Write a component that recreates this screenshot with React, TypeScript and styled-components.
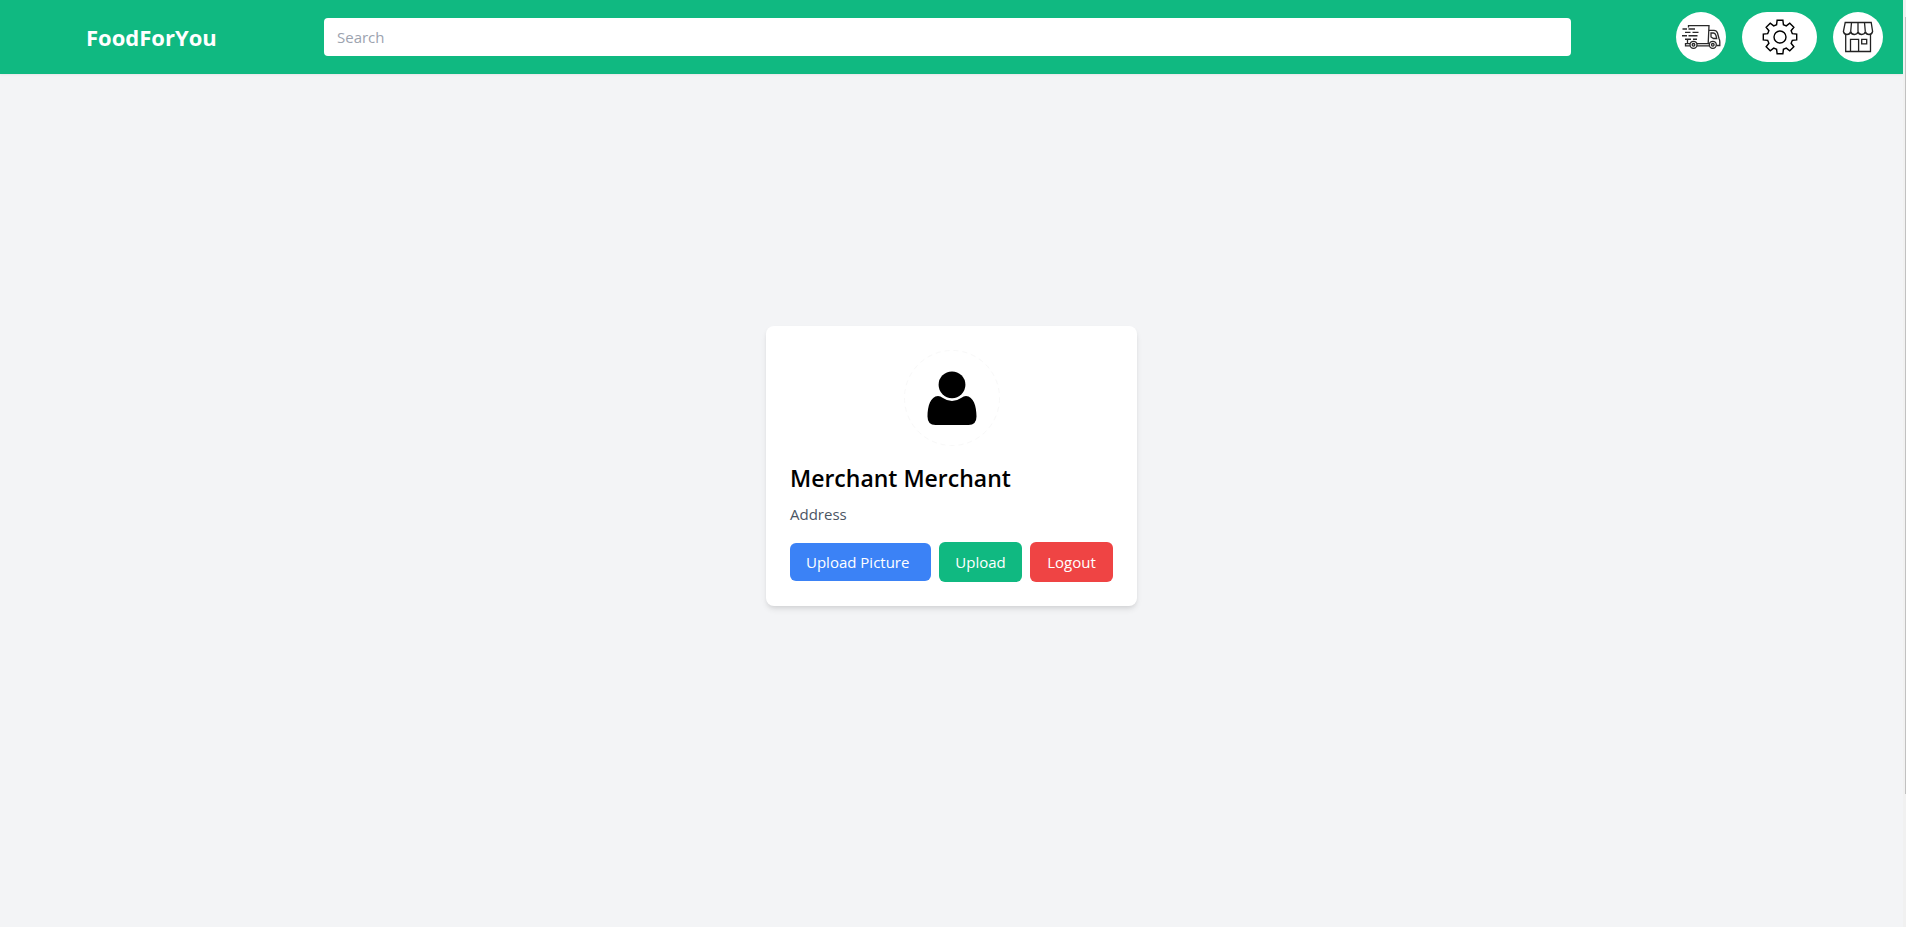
import React from "react";
import styled, { createGlobalStyle } from "styled-components";

const GlobalStyle = createGlobalStyle`
  *, *::before, *::after { box-sizing: border-box; }
  body {
    margin: 0;
    background: #f3f4f6;
    color: #000;
    font-family: "Open Sans", "Noto Sans", sans-serif;
    font-size: 15px;
    line-height: 24px;
  }
`;

const Screen = styled.div`
  display: flex;
  min-height: 100vh;
`;

const Page = styled.div`
  flex: 1;
  min-width: 0;
  display: flex;
  flex-direction: column;
`;

const ScrollTrack = styled.div`
  display: flex;
  flex-direction: column;
  width: 3px;
  padding: 17px 0 133px 2px;
  background: #f1f1f1;
`;

const ScrollThumb = styled.div`
  flex: 1;
  background: #c1c1c1;
`;

const Header = styled.header`
  display: grid;
  grid-template-columns: 324px minmax(0, 1fr) 332px;
  align-items: center;
  padding: 12px 0;
  background: #10b981;
  box-shadow: 0 1px 2px rgba(0, 0, 0, 0.06);
`;

const Brand = styled.a`
  padding-left: 86px;
  color: #fff;
  font-size: 22px;
  font-weight: 700;
  line-height: 32px;
  text-decoration: none;
`;

const SearchInput = styled.input`
  width: 100%;
  height: 38px;
  padding: 0 13px;
  border: 0;
  border-radius: 4px;
  background: #fff;
  color: #111827;
  font: inherit;

  &::placeholder {
    color: #9ca3af;
    opacity: 1;
  }
`;

const Actions = styled.nav`
  display: flex;
  justify-content: flex-end;
  gap: 16px;
  padding-right: 20px;
`;

const IconButton = styled.button<{ $wide?: boolean }>`
  display: flex;
  align-items: center;
  justify-content: center;
  width: ${(p) => (p.$wide ? 75 : 50)}px;
  height: 50px;
  padding: 0;
  border: 0;
  border-radius: 25px;
  background: #fff;
  cursor: pointer;
`;

const Main = styled.main`
  flex: 1;
  display: flex;
  align-items: center;
  justify-content: center;
  padding-bottom: 69px;
`;

const Card = styled.section`
  padding: 24px;
  border-radius: 8px;
  background: #fff;
  box-shadow: 0 4px 6px -1px rgba(0, 0, 0, 0.1), 0 2px 4px -1px rgba(0, 0, 0, 0.06);
`;

const Avatar = styled.svg`
  display: block;
  width: 96px;
  height: 96px;
  margin: 0 auto 16px;
`;

const Name = styled.h2`
  margin: 0 0 8px;
  font-size: 23px;
  font-weight: 600;
  line-height: 32px;
`;

const Address = styled.p`
  margin: 0 0 16px;
  color: #4b5563;
`;

const ButtonRow = styled.div`
  display: flex;
  align-items: center;
  gap: 8px;
`;

const FileLabel = styled.label`
  width: 141px;
  height: 38px;
  padding: 7px 16px;
  border-radius: 6px;
  background: #3b82f6;
  color: #fff;
  white-space: nowrap;
  cursor: pointer;
`;

const Button = styled.button<{ $color: string }>`
  width: 83px;
  height: 40px;
  padding: 0;
  border: 0;
  border-radius: 6px;
  background: ${(p) => p.$color};
  color: #fff;
  font: inherit;
  cursor: pointer;
`;

const TruckIcon = () => (
  <svg width="50" height="50" viewBox="0 0 50 50" fill="none" stroke="#2a2a2a" strokeWidth="1.3" aria-hidden="true">
    <path d="M12.500 15.500V13.600H33L32.200 31.500M11.500 27V31" />
    <path d="M6.500 17H11M12.500 17H19M9 20.400H14.500M16.500 20.400H22.500M6 23.800H11M12.500 23.800H21.500M9 27.200H15M17 27.200H21" strokeWidth="1.400" />
    <path d="M33 18.300H38Q40.500 18.300 41.500 21L43 26.500Q43.800 28 43.800 30V33.500H40.500" />
    <path d="M35 21H37.500Q39.200 21 40 23.500L40.700 26.500H37.500L35 25Z" />
    <path d="M14 33.800H9.500V31.600H14.200M20.800 31.600H33.500M21 33.800H33.300" />
    <circle cx="17.500" cy="32.800" r="3.500" />
    <circle cx="17.500" cy="32.800" r="1.300" />
    <circle cx="36.800" cy="32.800" r="3.500" />
    <circle cx="36.800" cy="32.800" r="1.300" />
  </svg>
);

const GEAR_TOOTH: [number, number][] = [
  [-3.4, -12.3],
  [-2.9, -16.7],
  [2.9, -16.7],
  [3.4, -12.3],
];

const gearPoints = Array.from({ length: 8 }, (_, i) => {
  const a = (i * Math.PI) / 4;
  return GEAR_TOOTH.map(
    ([x, y]) =>
      `${(x * Math.cos(a) - y * Math.sin(a)).toFixed(2)},${(x * Math.sin(a) + y * Math.cos(a)).toFixed(2)}`
  ).join(" ");
}).join(" ");

const GearIcon = () => (
  <svg width="50" height="50" viewBox="-25 -25 50 50" fill="none" stroke="#000" strokeWidth="1.4" aria-hidden="true">
    <polygon points={gearPoints} />
    <circle r="6" />
  </svg>
);

const StoreIcon = () => (
  <svg width="50" height="50" viewBox="0 0 50 50" fill="none" stroke="#222" strokeWidth="1.3" aria-hidden="true">
    <path d="M12.200 10.500H38.200L39.600 19.500Q39 22.500 36 22.500T32.300 19.500Q31.800 22.500 28.700 22.500T25 19.500Q24.500 22.500 21.400 22.500T17.700 19.500Q17 22.500 14 22.500T10.400 19.500Z" />
    <path d="M18.500 10.500L17.700 19.500M25 10.500V19.500M31.500 10.500L32.300 19.500" />
    <path d="M12.700 22.500V39.500H37.500V22.500" />
    <path d="M17.500 39.500V27.400H25.600V39.500" />
    <path d="M28.700 27.400h5v4.400h-5z" />
  </svg>
);

export default function App() {
  return (
    <>
      <GlobalStyle />
      <Screen>
        <Page>
          <Header>
            <Brand href="#">FoodForYou</Brand>
            <SearchInput type="search" placeholder="Search" aria-label="Search" />
            <Actions>
              <IconButton type="button" aria-label="Deliveries">
                <TruckIcon />
              </IconButton>
              <IconButton type="button" aria-label="Settings" $wide>
                <GearIcon />
              </IconButton>
              <IconButton type="button" aria-label="Store">
                <StoreIcon />
              </IconButton>
            </Actions>
          </Header>
          <Main>
            <Card>
              <Avatar viewBox="0 0 96 96" role="img" aria-label="Profile picture">
                <circle cx="48" cy="48" r="47.5" fill="none" stroke="#f8f8f8" strokeDasharray="5 4" />
                <circle cx="48" cy="34.800" r="13.400" />
                <path d="M34 46Q36.500 46 38.500 47.700Q48 54.300 57.500 47.700Q59.500 46 62 46C69.500 46.500 72.500 56 72.500 66.500Q72.500 75 64.500 75H31.500Q23.500 75 23.500 66.500C23.500 56 26.500 46.500 34 46Z" />
              </Avatar>
              <Name>Merchant Merchant</Name>
              <Address>Address</Address>
              <ButtonRow>
                <FileLabel htmlFor="picture">Upload Picture</FileLabel>
                <input id="picture" type="file" accept="image/*" hidden />
                <Button type="button" $color="#10b981">Upload</Button>
                <Button type="button" $color="#ef4444">Logout</Button>
              </ButtonRow>
            </Card>
          </Main>
        </Page>
        <ScrollTrack aria-hidden="true">
          <ScrollThumb />
        </ScrollTrack>
      </Screen>
    </>
  );
}
